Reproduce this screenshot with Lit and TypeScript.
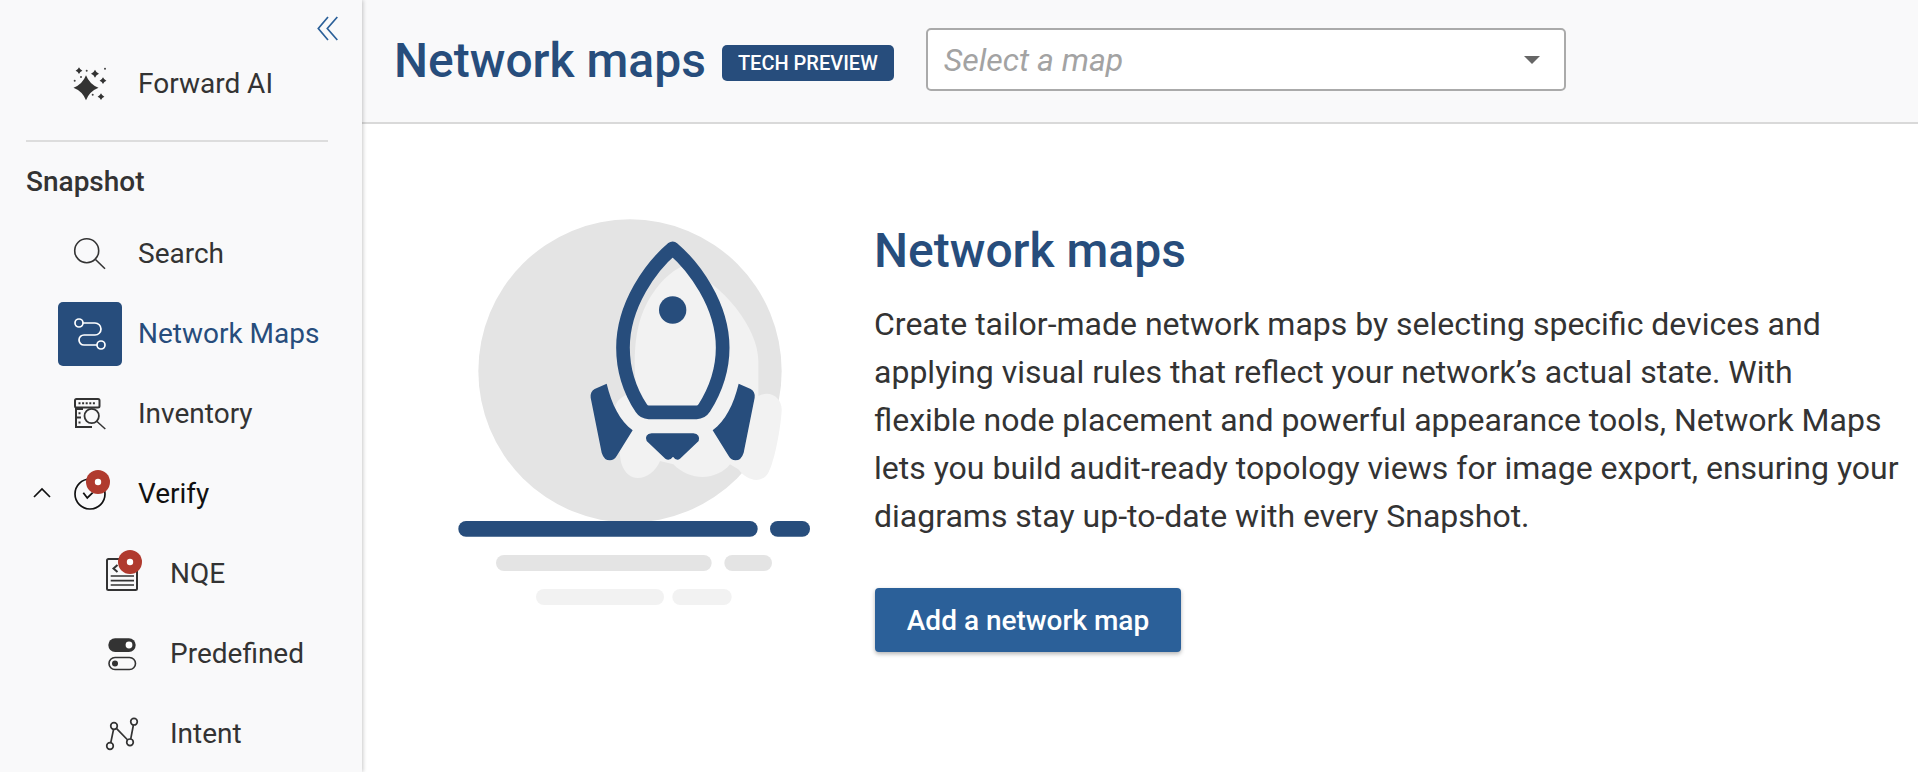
import { LitElement, css, html, svg } from 'lit';
import { customElement } from 'lit/decorators.js';

const badge = svg`<circle cx="40" cy="21" r="12" fill="#b03a2e"/><circle cx="40" cy="21" r="3.2" fill="#fff"/>`;

const sparkle = (x: number, y: number, r: number) => {
  const k = r * 0.28;
  return svg`<path d="M${x} ${y - r}Q${x + k} ${y - k} ${x + r} ${y}Q${x + k} ${y + k} ${x} ${y + r}Q${x - k} ${y + k} ${x - r} ${y}Q${x - k} ${y - k} ${x} ${y - r}Z" fill="#333"/>`;
};

const icons = {
  ai: svg`
    ${sparkle(28, 36.7, 12.5)}${sparkle(21, 19.7, 3.4)}${sparkle(37, 22.7, 4)}${sparkle(45, 29.7, 3.4)}${sparkle(43, 45.7, 3.4)}
    <g fill="#444"><circle cx="28.7" cy="19.7" r="1"/><circle cx="47" cy="17.7" r="1"/><circle cx="16.7" cy="29.7" r="1"/><circle cx="23" cy="26" r="1"/><circle cx="34.7" cy="43.7" r="1"/></g>`,
  search: svg`<g fill="none" stroke="#333" stroke-width="1.6"><circle cx="28.7" cy="29.7" r="12"/><path d="M37.5 38.5L47 47.7"/></g>`,
  maps: svg`<g fill="none" stroke="#fff" stroke-width="1.7"><circle cx="21" cy="21" r="4"/><circle cx="43" cy="43" r="4"/><path d="M25 21H37A6 6 0 0 1 37 33H26A5 5 0 0 0 26 43H39"/></g>`,
  inventory: svg`
    <g fill="none" stroke="#333" stroke-width="2"><rect x="17" y="18" width="24.5" height="8.5" rx="1.5"/><path d="M25 28H18V36.5H23M18 37V46H34"/></g>
    <path d="M20.5 22.2H38" stroke="#333" stroke-width="2" stroke-dasharray="2 1.6" fill="none"/>
    <path d="M20.5 32.2H23M20.5 41.5H24" stroke="#333" stroke-width="2" stroke-dasharray="2 1.6" fill="none"/>
    <circle cx="33.7" cy="35" r="7.2" fill="#f9f9fa" stroke="#333" stroke-width="1.8"/>
    <path d="M39 40.5L47.3 48" stroke="#333" stroke-width="1.5" fill="none"/>`,
  verify: svg`
    <circle cx="32" cy="33" r="15" fill="none" stroke="#111" stroke-width="1.7"/>
    <path d="M25.3 31.7L29.3 37L34.7 31.7" fill="none" stroke="#111" stroke-width="1.8"/>${badge}`,
  nqe: svg`
    <rect x="17" y="18" width="30" height="31" rx="1.5" fill="none" stroke="#333" stroke-width="2"/>
    <path d="M27.5 24L23.5 27.5L27.5 31" fill="none" stroke="#333" stroke-width="2"/>
    <path d="M20.7 35H44M20.7 39.7H44M20.7 44H44" stroke="#333" stroke-width="1.7" fill="none"/>${badge}`,
  predefined: svg`
    <rect x="18.3" y="17.3" width="27.4" height="13.6" rx="6.8" fill="#333"/><circle cx="39" cy="24" r="3.4" fill="#fff"/>
    <rect x="19" y="36.5" width="26.5" height="12" rx="6" fill="none" stroke="#333" stroke-width="1.6"/><circle cx="25" cy="42.5" r="3" fill="#333"/>`,
  intent: svg`
    <g fill="none" stroke="#333" stroke-width="1.7"><path d="M20.7 42L23.6 28.2M26.4 27.3L37.7 39M40.7 38.2L43.4 24"/>
    <circle cx="44" cy="20.7" r="3.3"/><circle cx="24" cy="25" r="3.3"/><circle cx="40" cy="41.3" r="3.3"/><circle cx="20" cy="45" r="3.3"/></g>`,
};

const icon = (body: unknown) => html`<svg class="ico" width="64" height="64" viewBox="0 0 64 64">${body}</svg>`;

@customElement('app-root')
export class AppRoot extends LitElement {
  render() {
    return html`
      <aside class="side">
        <div class="collapse">
          <svg width="22" height="26" viewBox="0 0 22 26" fill="none" stroke="#2b6099" stroke-width="1.7">
            <path d="M11 1L1.3 12.5L11 24M20.3 1L10.3 12.5L20.3 24"/>
          </svg>
        </div>
        <div class="row">${icon(icons.ai)}<span>Forward AI</span></div>
        <div class="rule"></div>
        <div class="section">Snapshot</div>
        <div class="row">${icon(icons.search)}<span>Search</span></div>
        <div class="row active"><span class="box">${icon(icons.maps)}</span><span>Network Maps</span></div>
        <div class="row">${icon(icons.inventory)}<span>Inventory</span></div>
        <div class="row parent">
          <svg class="chev" width="18" height="12" viewBox="0 0 18 12" fill="none" stroke="#111" stroke-width="1.7"><path d="M1 10L9 2L17 10"/></svg>
          ${icon(icons.verify)}<span>Verify</span>
        </div>
        <div class="row sub">${icon(icons.nqe)}<span>NQE</span></div>
        <div class="row sub">${icon(icons.predefined)}<span>Predefined</span></div>
        <div class="row sub">${icon(icons.intent)}<span>Intent</span></div>
      </aside>
      <main class="main">
        <header class="head">
          <h1>Network maps</h1>
          <span class="tag">TECH PREVIEW</span>
          <div class="select"><em>Select a map</em><i class="caret"></i></div>
        </header>
        <section class="body">
          <svg class="art" width="420" height="420" viewBox="0 0 1260 1260">
            <circle cx="600" cy="510" r="455" fill="#e4e4e4"/>
            <path fill="#f2f2f2" d="M760 195C880 250 985 380 985 480L985 585C1020 565 1058 590 1055 630C1050 700 1030 790 1015 815C995 850 950 840 925 805L900 790C870 830 790 850 730 790L690 780C670 830 600 860 575 790C565 750 565 660 555 620C560 590 590 580 620 570C610 500 610 400 640 330C670 260 720 210 760 195Z"/>
            <g fill="#274d7c">
              <path fill="none" stroke="#274d7c" stroke-width="41" stroke-linejoin="round" d="M728 142C790 195 878 310 878 440C878 510 855 570 822 622Q814 634 800 634L656 634Q642 634 634 622C600 570 579 510 579 440C579 310 665 195 728 142Z"/>
              <circle cx="728" cy="327" r="41"/>
              <path d="M530 548L494 564Q480 572 482 590L515 755Q522 778 540 778Q552 778 560 765L608 688C570 660 545 610 530 548Z"/>
              <path d="M926 548L962 564Q976 572 974 590L941 755Q934 778 916 778Q904 778 896 765L848 688C886 660 911 610 926 548Z"/>
              <path d="M665 697H790Q812 700 806 720L750 773Q740 782 729 767Q718 782 706 773L650 720Q642 700 665 697Z"/>
              <rect x="85" y="960" width="898" height="47" rx="23"/>
              <rect x="1020" y="960" width="120" height="47" rx="23"/>
            </g>
            <g fill="#e4e4e4"><rect x="198" y="1062" width="647" height="48" rx="24"/><rect x="883" y="1062" width="143" height="48" rx="24"/></g>
            <g fill="#f2f2f2"><rect x="318" y="1164" width="384" height="48" rx="24"/><rect x="727" y="1164" width="178" height="48" rx="24"/></g>
          </svg>
          <div class="copy">
            <h2>Network maps</h2>
            <p>Create tailor-made network maps by selecting specific devices and applying visual rules that reflect your network’s actual state. With flexible node placement and powerful appearance tools, Network Maps lets you build audit-ready topology views for image export, ensuring your diagrams stay up-to-date with every Snapshot.</p>
            <button>Add a network map</button>
          </div>
        </section>
      </main>
    `;
  }

  static styles = css`
    :host {
      display: flex;
      height: 772px;
      overflow: hidden;
      font-family: Roboto, sans-serif;
      color: #333;
      background: #fff;
    }

    .side {
      flex: 0 0 362px;
      position: relative;
      z-index: 1;
      background: #f9f9fa;
      box-shadow: 1px 0 4px rgba(0, 0, 0, 0.22);
      overflow: hidden;
    }

    .collapse {
      display: flex;
      justify-content: flex-end;
      height: 43px;
      padding: 16px 23px 0 0;
      box-sizing: border-box;
    }

    .row {
      display: flex;
      align-items: center;
      gap: 16px;
      height: 80px;
      padding-left: 58px;
      font-size: 28px;
      color: #333;
    }

    .ico {
      flex: none;
      display: block;
    }

    .box {
      width: 64px;
      height: 64px;
      margin-top: 2px;
      border-radius: 5px;
      background: #274d7c;
    }

    .active {
      color: #274d7c;
    }

    .parent {
      position: relative;
      color: #111;
    }

    .chev {
      position: absolute;
      left: 33px;
      top: 34px;
    }

    .sub {
      padding-left: 90px;
    }

    .rule {
      height: 2px;
      margin: 17px 34px 0 26px;
      background: #ddd;
    }

    .section {
      margin: 20px 0 11px 26px;
      font-size: 28px;
      font-weight: 500;
      line-height: 40px;
      color: #333;
    }

    .main {
      flex: 1;
      min-width: 0;
    }

    .head {
      display: flex;
      align-items: center;
      height: 122px;
      padding-left: 32px;
      background: #f9f9fa;
      border-bottom: 2px solid #d9d9d9;
    }

    h1 {
      margin: -2px 16px 0 0;
      font-size: 48px;
      font-weight: 500;
      color: #274d7c;
    }

    .tag {
      display: flex;
      align-items: center;
      height: 36px;
      margin-top: 4px;
      padding: 0 16px;
      border-radius: 5px;
      background: #274d7c;
      color: #fff;
      font-size: 20px;
      font-weight: 500;
    }

    .select {
      display: flex;
      align-items: center;
      justify-content: space-between;
      box-sizing: border-box;
      width: 640px;
      height: 63px;
      margin: -3px 0 0 32px;
      padding: 0 24px 0 16px;
      border: 2px solid #aaa;
      border-radius: 5px;
      background: #fff;
    }

    .select em {
      font-size: 32px;
      color: #a3a3a3;
    }

    .caret {
      width: 0;
      height: 0;
      border-left: 8px solid transparent;
      border-right: 8px solid transparent;
      border-top: 8px solid #666;
    }

    .body {
      display: flex;
      gap: 24px;
      padding: 77px 0 0 68px;
    }

    .art {
      flex: none;
    }

    .copy {
      width: 1026px;
      padding-top: 20px;
    }

    h2 {
      margin: 0;
      font-size: 48px;
      font-weight: 500;
      line-height: 60px;
      color: #274d7c;
    }

    p {
      margin: 19px 0 0;
      font-size: 32px;
      line-height: 48px;
      color: #333;
    }

    button {
      display: block;
      width: 306px;
      height: 64px;
      margin: 48px 0 0 1px;
      border: 0;
      border-radius: 4px;
      background: #2b6099;
      color: #fff;
      font-family: inherit;
      font-size: 28px;
      font-weight: 500;
      box-shadow: 0 2px 4px rgba(0, 0, 0, 0.3);
    }
  `;
}

declare global {
  interface HTMLElementTagNameMap {
    'app-root': AppRoot;
  }
}
